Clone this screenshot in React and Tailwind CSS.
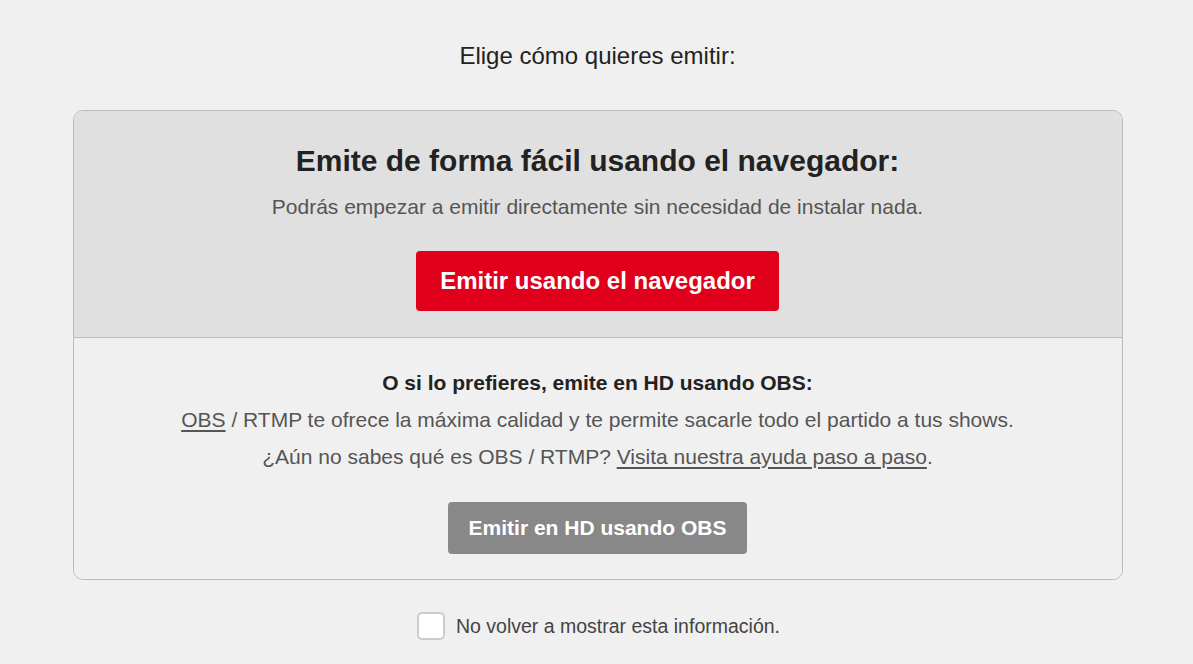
import React, { useState } from 'react';

export default function App() {
  const [hide, setHide] = useState(false);

  return (
    <div className="min-h-screen bg-[#f0f0f0] pl-[2px] pt-[42px] font-['Liberation_Sans',Arial,sans-serif]">
      <p className="text-center text-[24px] leading-[28px] text-[#222]">Elige cómo quieres emitir:</p>

      <div className="mx-auto mt-[40px] w-[1050px] overflow-hidden rounded-[10px] border border-[#bbb]">
        <div className="flex flex-col items-center bg-[#e0e0e0] pt-[33px] pb-[26px]">
          <h2 className="text-[30px] font-bold leading-[34px] text-[#222]">
            Emite de forma fácil usando el navegador:
          </h2>
          <p className="mt-[16px] text-[21px] leading-[26px] text-[#555]">
            Podrás empezar a emitir directamente sin necesidad de instalar nada.
          </p>
          <button className="mt-[31px] h-[60px] w-[363px] rounded-[4px] bg-[#e0001b] text-[24px] font-bold text-white">
            Emitir usando el navegador
          </button>
        </div>

        <div className="flex flex-col items-center border-t border-[#bbb] bg-[#f0f0f0] pt-[26px] pb-[25px] text-center text-[21px] leading-[37px] text-[#555]">
          <p className="font-bold text-[#222]">O si lo prefieres, emite en HD usando OBS:</p>
          <p>
            <a href="#" className="underline underline-offset-[3px]">OBS</a> / RTMP te ofrece la máxima calidad y te permite sacarle todo el partido a tus shows.
          </p>
          <p>
            ¿Aún no sabes qué es OBS / RTMP?{' '}
            <a href="#" className="underline underline-offset-[3px]">Visita nuestra ayuda paso a paso</a>.
          </p>
          <button className="mt-[27px] h-[52px] w-[299px] rounded-[4px] bg-[#888] pb-[2px] text-[21px] font-bold leading-none text-white">
            Emitir en HD usando OBS
          </button>
        </div>
      </div>

      <label className="mt-[31px] flex cursor-pointer items-center justify-center gap-[11px] text-[19.5px] leading-[30px] text-[#444]">
        <input type="checkbox" checked={hide} onChange={() => setHide(!hide)} className="sr-only" />
        <span className="ml-[2px] flex h-[28px] w-[28px] items-center justify-center rounded-[5px] border-2 border-[#ccc] bg-white">
          {hide && (
            <svg viewBox="0 0 16 16" className="h-4 w-4" fill="none" stroke="#444" strokeWidth="2.5">
              <path d="M3 8.5l3 3 7-7" />
            </svg>
          )}
        </span>
        <span>No volver a mostrar esta información.</span>
      </label>
    </div>
  );
}
